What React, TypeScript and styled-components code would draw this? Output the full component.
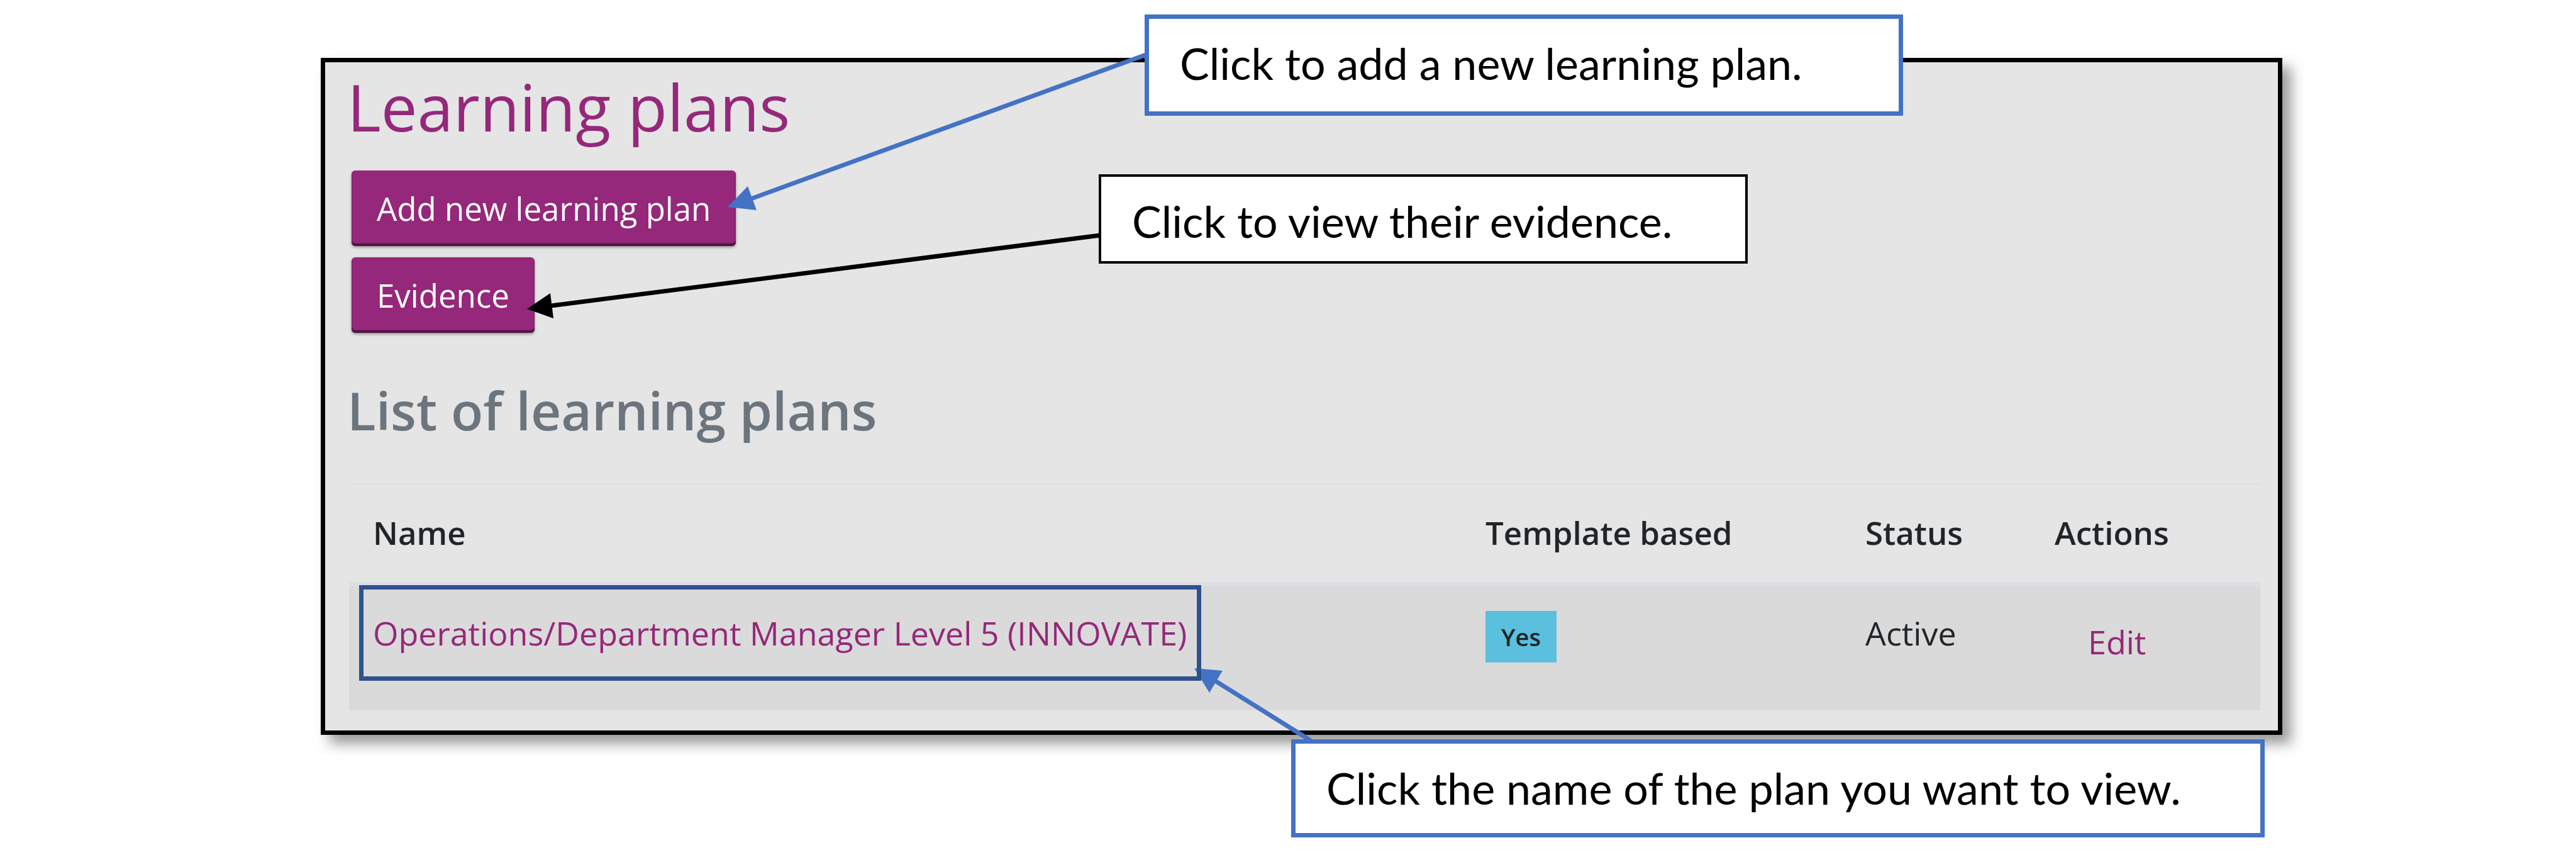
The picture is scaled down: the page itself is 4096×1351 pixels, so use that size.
import React from "react";
import styled, { createGlobalStyle } from "styled-components";

const PURPLE = "#95287a";
const BLUE = "#4472c4";

const GlobalStyle = createGlobalStyle`
  *, *::before, *::after { box-sizing: border-box; }
  body {
    margin: 0;
    background: #ffffff;
    color: #212529;
    font-family: "Open Sans", "Noto Sans", sans-serif;
    font-size: 51px;
    line-height: 76px;
  }
`;

const Page = styled.div`
  position: relative;
  padding: 92px 467px 183px 510px;
`;

const Panel = styled.main`
  padding: 8px 28px 32px 35px;
  border: 7px solid #000000;
  background: #e5e5e5;
  box-shadow: 14px 14px 20px rgba(0, 0, 0, 0.4);
`;

const Title = styled.h1`
  margin: 0 0 39px;
  color: ${PURPLE};
  font-size: 103px;
  font-weight: 400;
  line-height: 125px;
`;

const ButtonStack = styled.div`
  display: flex;
  flex-direction: column;
  align-items: flex-start;
  gap: 18px;
  padding-left: 7px;
`;

const Button = styled.button`
  height: 120px;
  padding: 0 40px;
  border: 0;
  border-radius: 6px;
  background: ${PURPLE};
  box-shadow: inset 0 -4px 2px rgba(60, 10, 50, 0.8), 0 2px 4px rgba(0, 0, 0, 0.4);
  color: #ffffff;
  font: inherit;
`;

const SectionTitle = styled.h2`
  margin: 73px 0 66px;
  color: #6c757d;
  font-size: 84px;
  font-weight: 600;
  line-height: 100px;
`;

const TableArea = styled.div`
  padding-left: 3px;
`;

const PlanTable = styled.table`
  width: 100%;
  table-layout: fixed;
  border-collapse: separate;
  border-spacing: 0;
  text-align: left;
`;

const Column = styled.col<{ $width?: number }>`
  width: ${({ $width }) => ($width ? `${$width}px` : "auto")};
`;

const HeadCell = styled.th`
  padding: 37px 0 41px 38px;
  border-top: 3px solid #dee1e5;
  border-bottom: 6px solid #dcdfe4;
  font-weight: 600;
`;

const Cell = styled.td`
  height: 198px;
  padding: 37px 0 0 38px;
  background: #dadada;
  font-size: 52px;
  vertical-align: top;
`;

const PlanLink = styled.a`
  color: ${PURPLE};
  text-decoration: none;
`;

const EditLink = styled(PlanLink)`
  display: block;
  padding: 14px 53px;
`;

const Badge = styled.span`
  display: inline-block;
  margin-top: 3px;
  padding: 0 25px;
  background: #5bc0de;
  font-size: 38px;
  font-weight: 600;
  line-height: 82px;
  vertical-align: top;
`;

const Arrows = styled.svg`
  position: absolute;
  top: 0;
  left: 0;
  overflow: visible;
  pointer-events: none;
`;

const Highlight = styled.div`
  position: absolute;
  top: 930px;
  left: 571px;
  width: 1339px;
  height: 152px;
  border: 7px solid #2f528f;
  pointer-events: none;
`;

const Callout = styled.aside<{
  $top: number;
  $left: number;
  $width: number;
  $height: number;
  $color: string;
  $border: number;
}>`
  position: absolute;
  top: ${({ $top }) => $top}px;
  left: ${({ $left }) => $left}px;
  width: ${({ $width }) => $width}px;
  height: ${({ $height }) => $height}px;
  padding: 28px 0 0 49px;
  border: ${({ $border, $color }) => `${$border}px solid ${$color}`};
  background: #ffffff;
  color: #000000;
  font-family: Lato, "Open Sans", sans-serif;
  font-size: 70px;
  line-height: 84px;
  white-space: nowrap;
`;

export default function App() {
  return (
    <>
      <GlobalStyle />
      <Page>
        <Panel>
          <Title>Learning plans</Title>
          <ButtonStack>
            <Button type="button">Add new learning plan</Button>
            <Button type="button">Evidence</Button>
          </ButtonStack>
          <SectionTitle>List of learning plans</SectionTitle>
          <TableArea>
            <PlanTable>
              <colgroup>
                <Column />
                <Column $width={604} />
                <Column $width={301} />
                <Column $width={365} />
              </colgroup>
              <thead>
                <tr>
                  <HeadCell scope="col">Name</HeadCell>
                  <HeadCell scope="col">Template based</HeadCell>
                  <HeadCell scope="col">Status</HeadCell>
                  <HeadCell scope="col">Actions</HeadCell>
                </tr>
              </thead>
              <tbody>
                <tr>
                  <Cell>
                    <PlanLink href="#plan">Operations/Department Manager Level 5 (INNOVATE)</PlanLink>
                  </Cell>
                  <Cell>
                    <Badge>Yes</Badge>
                  </Cell>
                  <Cell>Active</Cell>
                  <Cell>
                    <EditLink href="#edit">Edit</EditLink>
                  </Cell>
                </tr>
              </tbody>
            </PlanTable>
          </TableArea>
        </Panel>

        <Arrows width="4096" height="1351" viewBox="0 0 4096 1351" aria-hidden="true">
          <g stroke={BLUE} fill={BLUE}>
            <path d="M1822 87 L1194 316" strokeWidth="7" />
            <path d="M1157 329 L1189 296 L1203 334 Z" stroke="none" />
            <path d="M2084 1177 L1932 1082" strokeWidth="7" />
            <path d="M1899 1062 L1944 1066 L1923 1101 Z" stroke="none" />
          </g>
          <g stroke="#000000" fill="#000000">
            <path d="M1749 374 L876 486" strokeWidth="7" />
            <path d="M838 491 L875 466 L880 506 Z" stroke="none" />
          </g>
        </Arrows>
        <Highlight />
        <Callout $top={23} $left={1820} $width={1206} $height={161} $color={BLUE} $border={7}>
          Click to add a new learning plan.
        </Callout>
        <Callout $top={277} $left={1747} $width={1032} $height={142} $color="#000000" $border={4}>
          Click to view their evidence.
        </Callout>
        <Callout $top={1175} $left={2053} $width={1548} $height={156} $color={BLUE} $border={7}>
          Click the name of the plan you want to view.
        </Callout>
      </Page>
    </>
  );
}
